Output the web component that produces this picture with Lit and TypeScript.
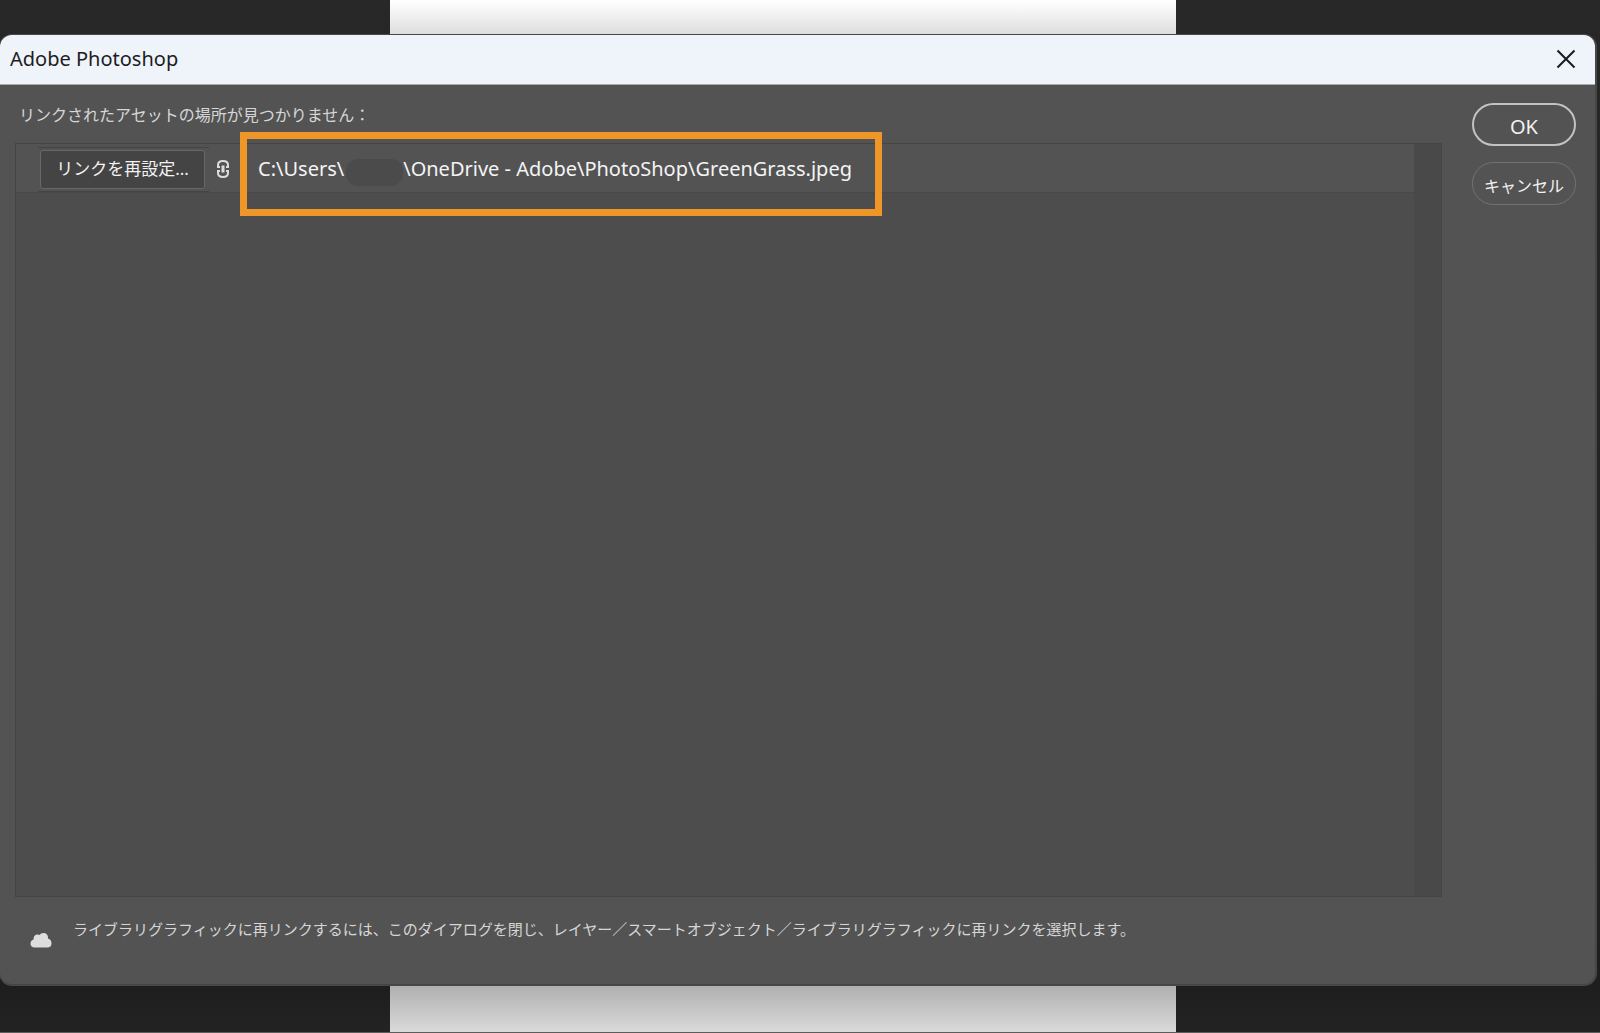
import { LitElement, html, css } from "lit";
import { customElement, property } from "lit/decorators.js";

@customElement("missing-asset-row")
class MissingAssetRow extends LitElement {
  @property() prefix = "";
  @property() suffix = "";

  static styles = css`
    :host {
      display: flex;
      align-items: center;
      position: relative;
      height: 49px;
      padding: 2px 0 0 22px;
      background: #535353;
      border-bottom: 1px solid #484848;
      box-sizing: border-box;
    }
    .frame {
      padding: 2px 4px 2px 2px;
      border-top: 1px solid #444;
      border-bottom: 1px solid #444;
    }
    .relink {
      display: block;
      width: 165px;
      height: 39px;
      padding: 0;
      border: 1px solid #686868;
      border-radius: 3px;
      background: #444;
      color: #f2f2f2;
      font: 17px/20px "Noto Sans", "Noto Sans CJK JP", sans-serif;
    }
    .link {
      flex: none;
      width: 14px;
      height: 20px;
      margin: 0 28px 0 7px;
    }
    .path {
      display: flex;
      align-items: center;
      color: #f4f4f4;
      font: 20px/28px "Noto Sans", sans-serif;
      white-space: pre;
    }
    .redacted {
      width: 57px;
      height: 27px;
      margin: 6px 0 0 2px;
      border-radius: 12px;
      background: #4b4b4b;
    }
    .highlight {
      position: absolute;
      left: 224px;
      top: -12px;
      width: 642px;
      height: 84px;
      box-sizing: border-box;
      border: 7px solid #ee9728;
      pointer-events: none;
    }
  `;

  render() {
    return html`
      <div class="frame"><button class="relink" type="button">リンクを再設定...</button></div>
      <svg class="link" viewBox="0 0 14 20" fill="none" stroke="#dcdcdc" stroke-width="2" aria-hidden="true">
        <path d="M4 8H2V6Q2 2 7 2Q12 2 12 6V8H10M4 12H2V14Q2 18 7 18Q12 18 12 14V12H10" />
        <path d="M7 6.500V13.500" stroke-width="3" />
      </svg>
      <div class="path"><span>${this.prefix}</span><span class="redacted"></span><span>${this.suffix}</span></div>
      <div class="highlight"></div>
    `;
  }
}

@customElement("app-root")
class AppRoot extends LitElement {
  static styles = css`
    :host {
      display: block;
    }
    .stage {
      position: relative;
      display: flex;
      min-height: 100vh;
      box-sizing: border-box;
      padding: 35px 4px 47px 0;
      background: linear-gradient(#282828, #272727 34px, #1e1e1e 96%, #232323);
      border-bottom: 1px solid #5c5c5c;
      overflow: hidden;
    }
    .paper {
      position: absolute;
      top: 0;
      bottom: 0;
      left: 390px;
      right: 424px;
      background: linear-gradient(#fff, #f4f4f4 12px, #dedede 34px, #b0b0b0 calc(100% - 46px), #dadada);
    }
    .dialog {
      position: relative;
      flex: 1;
      display: flex;
      flex-direction: column;
      border-radius: 12px;
      border-right: 1px solid #454545;
      border-bottom: 1px solid #454545;
      background: #535353;
      box-shadow: 0 0 0 1px #4a4747;
      overflow: hidden;
      font-family: "Noto Sans", "Noto Sans CJK JP", sans-serif;
    }
    .titlebar {
      display: flex;
      align-items: center;
      justify-content: space-between;
      height: 50px;
      box-sizing: border-box;
      padding: 0 18px 2px 10px;
      background: #eff3fa;
      border-bottom: 1px solid #a6a8ab;
      color: #1d1d1f;
    }
    h1 {
      margin: 0;
      font: 20px/28px "Noto Sans", sans-serif;
    }
    .close {
      display: flex;
      padding: 0;
      border: 0;
      background: none;
    }
    .content {
      flex: 1;
      display: flex;
      gap: 30px;
      padding: 18px 19px 0 15px;
    }
    .main {
      flex: 1;
      display: flex;
      flex-direction: column;
    }
    .label {
      margin: 0;
      padding: 0 0 16px 4px;
      color: #d6d6d6;
      font-size: 16px;
      line-height: 24px;
    }
    .list {
      flex: 1;
      display: flex;
      border: 1px solid #444;
      background: #4d4d4d;
      padding: 0;
    }
    .rows {
      flex: 1;
    }
    .track {
      width: 27px;
      background: #494949;
    }
    .note {
      display: flex;
      gap: 21px;
      height: 87px;
      box-sizing: border-box;
      padding: 20px 0 0 15px;
      color: #d6d6d6;
      font-size: 15px;
      line-height: 24px;
    }
    .note p {
      margin: 0;
    }
    .cloud {
      flex: none;
      margin-top: 15px;
    }
    .actions {
      display: flex;
      flex-direction: column;
      gap: 16px;
    }
    .action {
      width: 104px;
      height: 43px;
      padding: 2px 0 0;
      border: 1px solid #737373;
      border-radius: 22px;
      background: none;
      color: #f2f2f2;
      font: 16px/20px "Noto Sans CJK JP", sans-serif;
    }
    .primary {
      padding: 4px 0 0;
      border: 2px solid #c2c2c2;
      font: 20px/24px "Noto Sans", sans-serif;
    }
  `;

  render() {
    return html`
      <div class="stage">
        <div class="paper"></div>
        <section class="dialog" role="dialog" aria-labelledby="title">
          <header class="titlebar">
            <h1 id="title">Adobe Photoshop</h1>
            <button class="close" type="button" aria-label="閉じる">
              <svg width="22" height="22" viewBox="0 0 22 22" fill="none" stroke="#1a1a1a" stroke-width="2">
                <path d="M2.500 2.500L19.500 19.500M19.500 2.500L2.500 19.500" />
              </svg>
            </button>
          </header>
          <div class="content">
            <div class="main">
              <p class="label">リンクされたアセットの場所が見つかりません：</p>
              <div class="list">
                <div class="rows">
                  <missing-asset-row
                    prefix="C:\\Users\\"
                    suffix="\\OneDrive - Adobe\\PhotoShop\\GreenGrass.jpeg"
                  ></missing-asset-row>
                </div>
                <div class="track"></div>
              </div>
              <div class="note">
                <svg class="cloud" width="22" height="16" viewBox="0 0 22 16" fill="#dedede" aria-hidden="true">
                  <path d="M4 15.500Q0.500 15 0.500 11.500Q0.500 8.500 3.500 7.500Q3.500 3 7 2.500Q8.500 2.300 9.500 3Q11 0.800 14 1Q18.300 1.700 18 6.500Q21.500 7.500 21.500 11.500Q21.500 15 18 15.500Z" />
                </svg>
                <p>ライブラリグラフィックに再リンクするには、このダイアログを閉じ、レイヤー／スマートオブジェクト／ライブラリグラフィックに再リンクを選択します。</p>
              </div>
            </div>
            <div class="actions">
              <button class="action primary" type="button">OK</button>
              <button class="action" type="button">キャンセル</button>
            </div>
          </div>
        </section>
      </div>
    `;
  }
}
